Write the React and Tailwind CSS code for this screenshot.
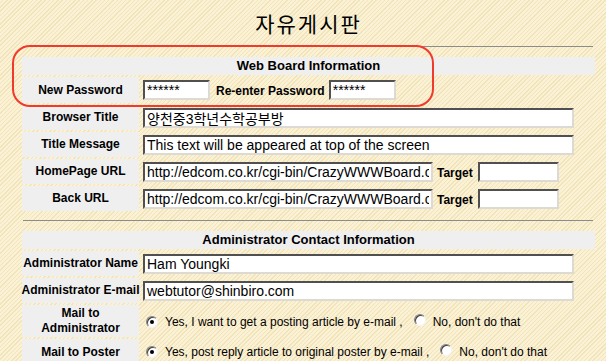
import React from "react";

const inputCls =
  "h-[20px] bg-white border-2 border-t-[#505050] border-l-[#505050] border-b-[#dcdad2] border-r-[#dcdad2] px-[2px] text-[14px] leading-[16px] text-black outline-none font-['Liberation_Sans','Noto_Sans_CJK_KR',sans-serif]";

function Label({ children, className = "" }) {
  return (
    <div
      className={`bg-[#efefef] flex items-center justify-center text-center text-[12px] font-bold leading-[15px] text-black ${className}`}
    >
      {children}
    </div>
  );
}

function Radio({ checked }) {
  return (
    <span className="inline-flex w-[12px] h-[12px] rounded-full bg-white border border-t-[#808080] border-l-[#808080] border-b-[#f4f4f4] border-r-[#f4f4f4] shadow-[inset_1px_1px_0_#404040] items-center justify-center">
      {checked && <span className="w-[4px] h-[4px] rounded-full bg-black" />}
    </span>
  );
}

function SectionHeader({ title }) {
  return (
    <>
      <div className="h-px bg-[#8c8c8c] ml-px mr-[2px]" />
      <div className="h-[18px] mt-[10px] bg-[#efefef] flex items-center justify-center text-[13px] font-bold text-black">
        {title}
      </div>
    </>
  );
}

function Row({ label, children, h = "h-[25px]", labelClass = "" }) {
  return (
    <div className={`flex gap-[2px] mt-[2px] ${h}`}>
      <Label className={`w-[117px] shrink-0 ${labelClass}`}>{label}</Label>
      <div className="flex items-center pl-[2px] flex-1">{children}</div>
    </div>
  );
}

export default function App() {
  const url = "http://edcom.co.kr/cgi-bin/CrazyWWWBoard.cgi?db=math";
  return (
    <div className="relative w-[606px] h-[361px] overflow-hidden bg-[#f9edc8] bg-[repeating-linear-gradient(-45deg,#f2e4ba_0px,#f2e4ba_1px,#fbf1d5_1px,#fbf1d5_3px)] font-['Liberation_Sans',Arial,sans-serif]">
      <div className="w-[573px] ml-[22px]">
        <h1 className="pt-[8px] h-[38px] text-center text-[21px] leading-[30px] tracking-[2px] font-normal text-black font-['Noto_Sans_CJK_KR',sans-serif]">
          자유게시판
        </h1>
        <div className="mt-[8px]">
          <SectionHeader title="Web Board Information" />
          <Row label="New Password" h="h-[26px]">
            <input
              className={`${inputCls} w-[67px] font-['Liberation_Mono',monospace] text-[12px]`}
              defaultValue="******"
              readOnly
            />
            <span className="ml-[6px] mr-[4px] mt-[2px] text-[12px] font-bold">Re-enter Password</span>
            <input
              className={`${inputCls} w-[67px] font-['Liberation_Mono',monospace] text-[12px]`}
              defaultValue="******"
              readOnly
            />
          </Row>
          <Row label="Browser Title">
            <input className={`${inputCls} w-[431px]`} defaultValue="양천중3학년수학공부방" readOnly />
          </Row>
          <Row label="Title Message">
            <input
              className={`${inputCls} w-[431px]`}
              defaultValue="This text will be appeared at top of the screen"
              readOnly
            />
          </Row>
          <Row label="HomePage URL">
            <input className={`${inputCls} w-[290px]`} defaultValue={url} readOnly />
            <span className="ml-[4px] mr-[5px] mt-[3px] text-[12px] font-bold">Target</span>
            <input className={`${inputCls} w-[81px]`} defaultValue="" readOnly />
          </Row>
          <Row label="Back URL">
            <input className={`${inputCls} w-[290px]`} defaultValue={url} readOnly />
            <span className="ml-[4px] mr-[5px] mt-[3px] text-[12px] font-bold">Target</span>
            <input className={`${inputCls} w-[81px]`} defaultValue="" readOnly />
          </Row>
        </div>

        <div className="mt-[9px]">
          <SectionHeader title="Administrator Contact Information" />
          <Row label="Administrator Name" labelClass="whitespace-nowrap">
            <input className={`${inputCls} w-[431px]`} defaultValue="Ham Youngki" readOnly />
          </Row>
          <Row label="Administrator E-mail" labelClass="whitespace-nowrap">
            <input className={`${inputCls} w-[431px]`} defaultValue="webtutor@shinbiro.com" readOnly />
          </Row>
          <Row
            label={
              <>
                Mail to
                <br />
                Administrator
              </>
            }
            h="h-[32px]"
          >
            <div className="flex items-center text-[12px] text-black pl-[3px] mt-[2px]">
              <Radio checked />
              <span className="ml-[7px]">Yes, I want to get a posting article by e-mail ,</span>
              <span className="ml-[11px]">
                <Radio />
              </span>
              <span className="ml-[7px]">No, don't do that</span>
            </div>
          </Row>
          <Row label="Mail to Poster" h="h-[26px]">
            <div className="flex items-center text-[12px] text-black pl-[3px]">
              <Radio checked />
              <span className="ml-[7px]">Yes, post reply article to original poster by e-mail ,</span>
              <span className="ml-[11px]">
                <Radio />
              </span>
              <span className="ml-[7px]">No, don't do that</span>
            </div>
          </Row>
        </div>
      </div>

      <div className="absolute left-[12px] top-[45px] w-[422px] h-[62px] rounded-[18px] border-2 border-[#f23a2c] pointer-events-none" />
    </div>
  );
}
